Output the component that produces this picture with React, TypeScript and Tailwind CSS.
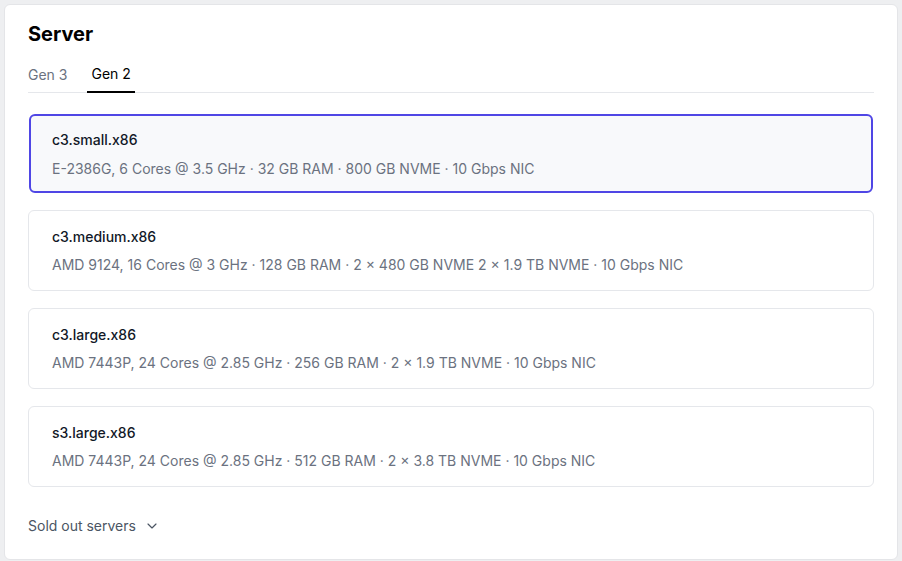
import { ChevronDown } from "lucide-react";

type Plan = {
  name: string;
  specs: string;
};

const plans: Plan[] = [
  { name: "c3.small.x86", specs: "E-2386G, 6 Cores @ 3.5 GHz · 32 GB RAM · 800 GB NVME · 10 Gbps NIC" },
  {
    name: "c3.medium.x86",
    specs: "AMD 9124, 16 Cores @ 3 GHz · 128 GB RAM · 2 × 480 GB NVME 2 × 1.9 TB NVME · 10 Gbps NIC",
  },
  { name: "c3.large.x86", specs: "AMD 7443P, 24 Cores @ 2.85 GHz · 256 GB RAM · 2 × 1.9 TB NVME · 10 Gbps NIC" },
  { name: "s3.large.x86", specs: "AMD 7443P, 24 Cores @ 2.85 GHz · 512 GB RAM · 2 × 3.8 TB NVME · 10 Gbps NIC" },
];

const PlanCard = ({ plan, selected }: { plan: Plan; selected: boolean }) => {
  if (selected) {
    return (
      <div className="h-[79px] mx-px rounded-md border-2 border-[#4f46e5] bg-[#f8f9fb] px-[21px] pt-[14px] flex flex-col gap-[9px]">
        <p className="text-sm leading-5 font-medium text-[#111827]">{plan.name}</p>
        <p className="text-sm leading-5 text-[#6b7280]">{plan.specs}</p>
      </div>
    );
  }
  return (
    <div className="h-[81px] rounded-md border border-[#e5e7eb] bg-white px-[23px] pt-4 flex flex-col gap-[8px]">
      <p className="text-sm leading-5 font-medium text-[#111827]">{plan.name}</p>
      <p className="text-sm leading-5 text-[#6b7280]">{plan.specs}</p>
    </div>
  );
};

export default function App() {
  return (
    <div className="w-[902px] h-[561px] bg-[#eeeff1] pt-1 pl-1 font-['Inter',sans-serif] antialiased">
      <div className="w-[894px] h-[556px] bg-white rounded-md border border-[#e4e5e8] px-[23px] pt-[15px]">
        <h2 className="text-xl leading-7 font-bold text-black">Server</h2>

        <div className="mt-4 flex gap-5 border-b border-[#e5e7eb]">
          <button className="text-sm leading-5 pb-[7px] text-[#6b7280]">Gen 3</button>
          <button className="text-sm leading-5 pb-[7px] px-1 text-black border-b-2 border-black -mb-px">Gen 2</button>
        </div>

        <div className="mt-[21px] flex flex-col">
          <div className="mb-[17px]">
            <PlanCard plan={plans[0]} selected />
          </div>
          <div className="flex flex-col gap-[17px]">
            {plans.slice(1).map((p) => (
              <PlanCard key={p.name} plan={p} selected={false} />
            ))}
          </div>
        </div>

        <button className="mt-[29px] flex items-center gap-2 text-sm leading-5 text-[#4b5563]">
          Sold out servers
          <ChevronDown size={16} strokeWidth={1.75} className="text-[#4b5563]" />
        </button>
      </div>
    </div>
  );
}
